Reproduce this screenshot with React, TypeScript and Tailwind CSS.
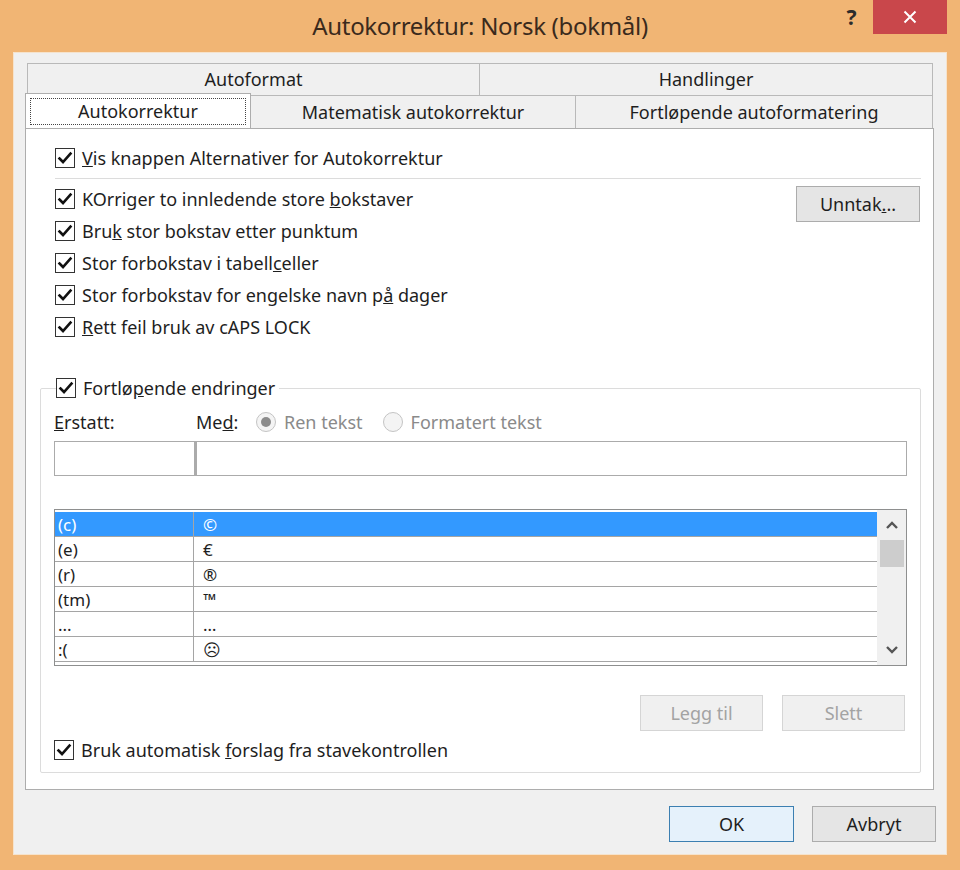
import React from 'react';

const font = "font-['Noto_Sans','Open_Sans',sans-serif]";

function Check({ checked = true }: { checked?: boolean }) {
  return (
    <span className="w-[20px] h-[20px] border border-[#333333] bg-white flex items-center justify-center shrink-0">
      {checked && (
        <svg width="16" height="16" viewBox="0 0 16 16">
          <path d="M2.5 8.5 L6 12 L13.5 3.5" fill="none" stroke="#111" strokeWidth="2.6" strokeLinecap="square" />
        </svg>
      )}
    </span>
  );
}

function CheckRow({ children, className = '' }: { children: React.ReactNode; className?: string }) {
  return (
    <div className={`flex items-center gap-[7px] h-[32px] ${className}`}>
      <Check />
      <span className="text-[18px] text-[#1e1e1e] leading-none whitespace-nowrap">{children}</span>
    </div>
  );
}

function Radio({ on, label }: { on: boolean; label: string }) {
  return (
    <div className="flex items-center gap-[8px]">
      <span className="w-[20px] h-[20px] rounded-full border border-[#c4c4c4] bg-[#f4f4f4] flex items-center justify-center">
        {on && <span className="w-[10px] h-[10px] rounded-full bg-[#8c8c8c]" />}
      </span>
      <span className="text-[18px] text-[#8a8a8a] leading-none">{label}</span>
    </div>
  );
}

const rows: [string, string][] = [
  ['(c)', '©'],
  ['(e)', '€'],
  ['(r)', '®'],
  ['(tm)', '™'],
  ['...', '…'],
  [':(', '☹'],
];

export default function App() {
  return (
    <div className={`w-[960px] h-[870px] bg-[#f1b574] flex flex-col ${font}`}>
      {/* Title bar */}
      <div className="h-[52px] flex items-start shrink-0">
        <div className="w-[130px]" />
        <div className="flex-1 text-center pt-[14px] text-[24px] text-[#3b2a1c] leading-none tracking-[-0.3px]">
          Autokorrektur: Norsk (bokmål)
        </div>
        <div className="w-[130px] flex items-start">
          <span className="w-[43px] text-center pt-[7px] text-[21px] font-bold text-[#2b2b2b] leading-none">?</span>
          <span className="w-[74px] h-[34px] bg-[#c9474b] flex items-center justify-center">
            <svg width="14" height="14" viewBox="0 0 14 14">
              <path d="M1.5 1.5 L12.5 12.5 M12.5 1.5 L1.5 12.5" stroke="#fff" strokeWidth="2" />
            </svg>
          </span>
        </div>
      </div>

      {/* Client area */}
      <div className="mx-[13px] mb-[15px] flex-1 bg-[#f0f0f0] border border-[#f6e3cc] pl-[11px] pr-[12px] pt-[10px] flex flex-col">
        {/* Tabs */}
        <div className="flex ml-[2px] mr-[1px] h-[32px] text-[18px] text-[#1e1e1e]">
          <div className="w-[453px] border border-[#b9b9b9] border-b-0 bg-[#f0f0f0] flex items-center justify-center">Autoformat</div>
          <div className="flex-1 border border-[#b9b9b9] border-l-0 border-b-0 bg-[#f0f0f0] flex items-center justify-center">Handlinger</div>
        </div>
        <div className="flex h-[33px] text-[18px] text-[#1e1e1e] mr-[1px]">
          <div className="w-[226px] bg-white border border-[#adadad] border-b-0 -mt-[2px] h-[35px] relative z-10 p-[4px] pb-[3px]">
            <div className="h-full border border-dotted border-[#444] flex items-center justify-center">Autokorrektur</div>
          </div>
          <div className="w-[325px] border border-[#b9b9b9] border-l-0 border-b-0 bg-[#f0f0f0] flex items-center justify-center">Matematisk autokorrektur</div>
          <div className="flex-1 border border-[#b9b9b9] border-l-0 border-b-0 bg-[#f0f0f0] flex items-center justify-center">Fortløpende autoformatering</div>
        </div>

        {/* Panel */}
        <div className="h-[662px] bg-white border border-[#adadad] pl-[29px] pr-[12px] pt-[13px] flex flex-col">
          <CheckRow>
            <span><u>V</u>is knappen Alternativer for Autokorrektur</span>
          </CheckRow>
          <div className="h-px bg-[#dcdcdc] mt-[4px] mb-[4px]" />
          <div className="flex">
            <div className="flex-1 flex flex-col">
              <CheckRow>KOrriger to innledende store <u>b</u>okstaver</CheckRow>
              <CheckRow>Bru<u>k</u> stor bokstav etter punktum</CheckRow>
              <CheckRow>Stor forbokstav i tabell<u>c</u>eller</CheckRow>
              <CheckRow>Stor forbokstav for engelske navn p<u>å</u> dager</CheckRow>
              <CheckRow><u>R</u>ett feil bruk av cAPS LOCK</CheckRow>
            </div>
            <div className="pt-[3px] pr-[1px]">
              <button className="w-[124px] h-[36px] bg-[#e5e5e5] border border-[#acacac] text-[18px] text-[#1e1e1e] leading-none">
                Unntak<u>.</u>..
              </button>
            </div>
          </div>

          {/* Group box */}
          <div className="mt-[45px] -ml-[15px] h-[385px] border border-[#dcdcdc] rounded-[2px] flex flex-col pl-[13px] pr-[13px]">
            <div className="-mt-[17px] pl-[2px] flex">
              <div className="flex items-center gap-[7px] h-[32px] bg-white pr-[4px]">
                <Check />
                <span className="text-[18px] text-[#1e1e1e] leading-none">Fortlø<u>p</u>ende endringer</span>
              </div>
            </div>
            <div className="flex items-center h-[36px]">
              <span className="w-[142px] text-[18px] text-[#1e1e1e] leading-none"><u>E</u>rstatt:</span>
              <span className="w-[60px] text-[18px] text-[#1e1e1e] leading-none">Me<u>d</u>:</span>
              <div className="flex items-center gap-[20px]">
                <Radio on label="Ren tekst" />
                <Radio on={false} label="Formatert tekst" />
              </div>
            </div>
            <div className="flex h-[35px] mt-[1px]">
              <div className="w-[141px] border border-[#ababab] bg-white" />
              <div className="flex-1 border border-[#ababab] border-l-[2px] bg-white" />
            </div>

            {/* List */}
            <div className="mt-[33px] h-[157px] border border-[#8e8f8f] bg-white flex">
              <div className="flex-1 flex flex-col pt-[2px]">
                {rows.map(([a, b], i) => (
                  <div
                    key={a}
                    className={`flex h-[25px] border-b border-[#a5a5a5] text-[17px] leading-none ${
                      i === 0 ? 'bg-[#3399ff] text-white border-[#9ec9f5]' : 'text-[#1e1e1e]'
                    }`}
                  >
                    <div className="w-[139px] border-r border-[#a5a5a5] flex items-center pl-[3px]">{a}</div>
                    <div className="flex-1 flex items-center pl-[9px]">{b}</div>
                  </div>
                ))}
              </div>
              <div className="w-[29px] bg-[#f0f0f0] flex flex-col items-center">
                <div className="h-[30px] flex items-center justify-center">
                  <svg width="14" height="10" viewBox="0 0 14 10">
                    <path d="M2 8 L7 3 L12 8" fill="none" stroke="#555" strokeWidth="2.4" />
                  </svg>
                </div>
                <div className="w-[24px] h-[27px] bg-[#cdcdcd]" />
                <div className="flex-1" />
                <div className="h-[30px] flex items-center justify-center">
                  <svg width="14" height="10" viewBox="0 0 14 10">
                    <path d="M2 2 L7 7 L12 2" fill="none" stroke="#555" strokeWidth="2.4" />
                  </svg>
                </div>
              </div>
            </div>

            <div className="flex justify-end gap-[19px] mt-[29px] pr-[2px]">
              <button className="w-[123px] h-[36px] bg-[#f0f0f0] border border-[#d5d5d5] text-[18px] text-[#a3a3a3] leading-none">Legg til</button>
              <button className="w-[123px] h-[36px] bg-[#f0f0f0] border border-[#d5d5d5] text-[18px] text-[#a3a3a3] leading-none">Slett</button>
            </div>
            <CheckRow className="mt-[3px]">
              <span>Bruk automatisk <u>f</u>orslag fra stavekontrollen</span>
            </CheckRow>
          </div>
        </div>

        {/* Dialog buttons */}
        <div className="flex justify-end gap-[18px] mt-[16px] -mr-[2px]">
          <button className="w-[125px] h-[36px] bg-[#e5f1fb] border border-[#3c7fb1] text-[18px] text-[#1e1e1e] leading-none">OK</button>
          <button className="w-[124px] h-[36px] bg-[#e5e5e5] border border-[#acacac] text-[18px] text-[#1e1e1e] leading-none">Avbryt</button>
        </div>
      </div>
    </div>
  );
}
